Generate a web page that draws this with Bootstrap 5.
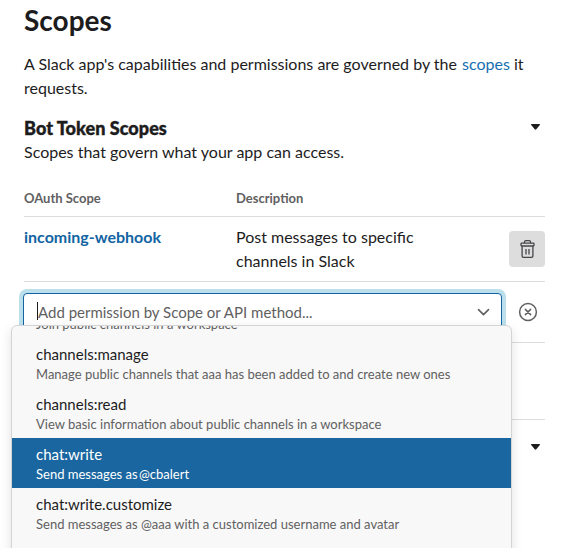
<!DOCTYPE html>
<html lang="en">
<head>
    <meta charset="UTF-8">
    <meta name="viewport" content="width=device-width, initial-scale=1.0">
    <title>Scopes</title>
    <link rel="stylesheet" href="https://cdn.jsdelivr.net/npm/bootstrap@5.3.0/dist/css/bootstrap.min.css">
    <style>
        body { font-family: Lato, "Liberation Sans", sans-serif; font-size: 16px; line-height: 24px; color: #1d1c1d; }
        .page { height: 548px; padding: 3px 28px 0 24px; }
        .page-title { font-size: 28px; line-height: 34px; font-weight: 700; margin-bottom: 15px; }
        .section-title { font-size: 18px; line-height: 24px; font-weight: 900; letter-spacing: .06px; -webkit-text-stroke: .4px #1d1c1d; }
        a { color: #1264a3; text-decoration: none; }
        .intro-link { color: #176fb0; margin-left: 1px; }
        .col-scope { width: 212px; }
        .col-desc { width: 200px; }
        .line { border-bottom: 1px solid #dddddd; }
        .scope-head { font-size: 13px; line-height: 22px; font-weight: 700; color: #616061; padding: 23px 0 7px; }
        .scope-row { height: 65px; padding-top: 8px; }
        .trash-btn { width: 36px; height: 36px; margin-top: 6px; border-radius: 4px; background: #dddddd; }
        .add-row { height: 61px; padding-top: 11px; }
        .picker { width: 479px; margin-left: -1px; }
        .picker-input { height: 38px; padding: 0 10px 0 13px; border: 1px solid #1264a3; border-radius: 4px; background: #fff; box-shadow: 0 0 0 4px #bcdfec; color: #616061; font-size: 15px; }
        .text-caret { width: 1px; height: 18px; margin-top: -3px; background: #1d1c1d; }
        .cancel-icon { margin: 9px 0 0 15.5px; }
        /* option list hangs over the rows below */
        .picker-menu { top: 32px; left: -12px; width: 501px; height: 300px; background: #f8f8f8; border: 1px solid #d4d4d4; border-radius: 6px; box-shadow: 0 4px 12px rgba(0, 0, 0, .12); }
        .option { height: 50px; padding: 4px 24px 0; font-size: 15px; line-height: 24px; }
        .option-desc { font-size: 13px; line-height: 17px; color: #616061; }
        .option-scrolled { height: 22px; padding-top: 0; margin-top: -10px; }
        .option.active { background: #1a66a0; color: #fff; }
        .option.active .option-desc { color: #fff; }
        .bot-name { margin-left: -2px; }
        .spacer-row { height: 77px; }
        .fold-caret { margin: 8px 5px 0 0; }
    </style>
</head>
<body>
    <main class="page overflow-hidden">
        <h1 class="page-title">Scopes</h1>
        <p class="mb-3">A Slack app's capabilities and permissions are governed by the <a class="intro-link" href="#">scopes</a> it requests.</p>

        <!-- Bot scopes -->
        <div class="d-flex justify-content-between align-items-start">
            <div>
                <h2 class="section-title mb-0">Bot Token Scopes</h2>
                <div>Scopes that govern what your app can access.</div>
            </div>
            <svg class="fold-caret" width="9" height="6" viewBox="0 0 9 6"><path d="M.5 0h8q.7.3.3.9L5.3 5.2q-.8.9-1.6 0L.2.9Q-.2.3.5 0z" fill="#1d1c1d"/></svg>
        </div>

        <div class="scope-head d-flex line">
            <div class="col-scope">OAuth Scope</div>
            <div>Description</div>
        </div>
        <div class="scope-row d-flex line">
            <div class="col-scope"><a class="fw-bold" href="#">incoming-webhook</a></div>
            <div class="col-desc">Post messages to specific channels in Slack</div>
            <button class="trash-btn border-0 p-0 ms-auto d-flex align-items-center justify-content-center" aria-label="Delete">
                <svg width="16" height="20" viewBox="0 0 16 20" fill="none" stroke="#454447" stroke-width="1.3" stroke-linejoin="round">
                    <path d="M5.5 4V3q0-1.4 1.4-1.4h3.2q1.4 0 1.4 1.4v1"/>
                    <rect x="2" y="4.2" width="13" height="2.8" rx=".8"/>
                    <path d="M3.1 7v10q0 1.4 1.4 1.4h8q1.4 0 1.4-1.4V7M7 10v5.5M10 10v5.5"/>
                </svg>
            </button>
        </div>

        <!-- Scope picker -->
        <div class="add-row d-flex align-items-start line">
            <div class="picker position-relative">
                <div class="picker-input d-flex align-items-center">
                    <span class="text-caret"></span>
                    <span class="flex-grow-1">Add permission by Scope or API method...</span>
                    <svg width="16" height="16" viewBox="0 0 16 16" fill="none" stroke="#616061" stroke-width="1.6" stroke-linecap="round" stroke-linejoin="round"><path d="M3.5 5.6l5 5 5-5"/></svg>
                </div>
                <div class="picker-menu position-absolute overflow-hidden">
                    <div class="option option-scrolled"><div class="option-desc">Join public channels in a workspace</div></div>
                    <div class="option"><div>channels:manage</div><div class="option-desc">Manage public channels that aaa has been added to and create new ones</div></div>
                    <div class="option"><div>channels:read</div><div class="option-desc">View basic information about public channels in a workspace</div></div>
                    <div class="option active"><div>chat:write</div><div class="option-desc">Send messages as <span class="bot-name">@cbalert</span></div></div>
                    <div class="option"><div>chat:write.customize</div><div class="option-desc">Send messages as @aaa with a customized username and avatar</div></div>
                </div>
            </div>
            <svg class="cancel-icon" width="20" height="20" viewBox="0 0 20 20" fill="none" stroke="#616061" stroke-width="1.5" stroke-linecap="round"><circle cx="10" cy="10" r="8.4"/><path d="M7.4 7.4l5.2 5.2M12.6 7.4l-5.2 5.2"/></svg>
        </div>
        <div class="spacer-row line"></div>

        <div class="d-flex justify-content-end pt-3">
            <svg class="fold-caret" width="9" height="6" viewBox="0 0 9 6"><path d="M.5 0h8q.7.3.3.9L5.3 5.2q-.8.9-1.6 0L.2.9Q-.2.3.5 0z" fill="#1d1c1d"/></svg>
        </div>
    </main>
    <script src="https://cdn.jsdelivr.net/npm/bootstrap@5.3.0/dist/js/bootstrap.bundle.min.js"></script>
</body>
</html>
